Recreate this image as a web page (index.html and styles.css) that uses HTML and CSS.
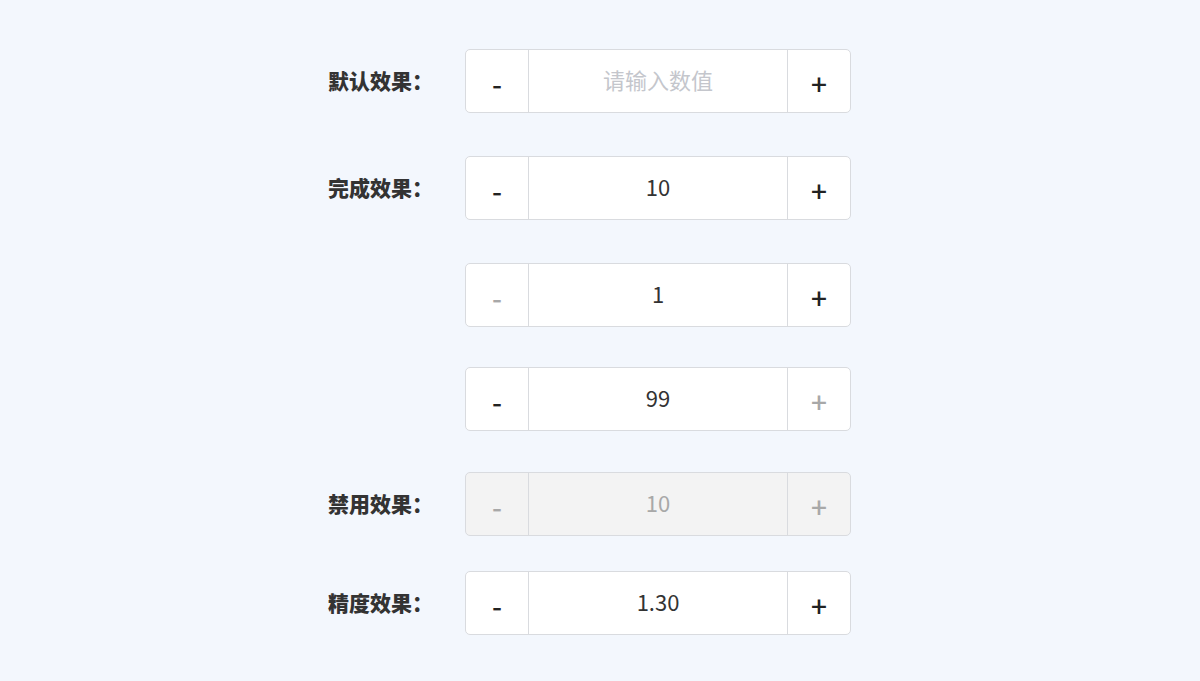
FILE: index.html
```html
<!DOCTYPE html>
<html>
<head>
    <meta charset="utf-8">
    <link rel="stylesheet" href="styles.css">
</head>
<body>
    <div class="form">
        <div class="form-row">
            <label class="form-label">默认效果：</label>
            <div class="number-box">
                <span class="step">-</span>
                <input class="number-input" type="text" placeholder="请输入数值">
                <span class="step">+</span>
            </div>
        </div>
        <div class="form-row">
            <label class="form-label">完成效果：</label>
            <div class="number-box">
                <span class="step">-</span>
                <input class="number-input" type="text" value="10">
                <span class="step">+</span>
            </div>
        </div>
        <div class="form-row">
            <label class="form-label"></label>
            <div class="number-box">
                <span class="step step-off">-</span>
                <input class="number-input" type="text" value="1">
                <span class="step">+</span>
            </div>
        </div>
        <div class="form-row">
            <label class="form-label"></label>
            <div class="number-box">
                <span class="step">-</span>
                <input class="number-input" type="text" value="99">
                <span class="step step-off">+</span>
            </div>
        </div>
        <div class="form-row">
            <label class="form-label">禁用效果：</label>
            <div class="number-box is-disabled">
                <span class="step step-off">-</span>
                <input class="number-input" type="text" value="10" disabled>
                <span class="step step-off">+</span>
            </div>
        </div>
        <div class="form-row">
            <label class="form-label">精度效果：</label>
            <div class="number-box">
                <span class="step">-</span>
                <input class="number-input" type="text" value="1.30">
                <span class="step">+</span>
            </div>
        </div>
    </div>
</body>
</html>
```

FILE: styles.css
```css
/* Page */
body {
  margin: 0;
  height: 681px;
  background-color: #f3f7fd;
  font-family: "Noto Sans CJK SC", "Noto Sans", sans-serif;
  color: #333;
  overflow: hidden;
}

.form {
  padding: 49px 0 0 265px;
}

/* Rows */
.form-row {
  display: flex;
  align-items: center;
  height: 64px;
  margin-bottom: 43px;
}

.form-row:nth-child(3) {
  margin-bottom: 40px;
}

.form-row:nth-child(4) {
  margin-bottom: 41px;
}

.form-row:nth-child(5) {
  margin-bottom: 35px;
}

.form-label {
  width: 200px;
  box-sizing: border-box;
  padding-right: 32px;
  padding-bottom: 2px;
  text-align: right;
  font-size: 21px;
  font-weight: 900;
  color: #333;
}

/* Number box */
.number-box {
  display: flex;
  width: 386px;
  height: 64px;
  box-sizing: border-box;
  border: 1px solid #d9dbdf;
  border-radius: 5px;
  background-color: #fff;
  overflow: hidden;
}

.step {
  display: flex;
  align-items: center;
  justify-content: center;
  width: 63px;
  flex: none;
  padding-top: 4px;
  box-sizing: border-box;
  font-size: 28px;
  font-weight: 500;
  color: #222;
  cursor: pointer;
  user-select: none;
}

.step:first-child {
  border-right: 1px solid #d9dbdf;
}

.step:last-child {
  border-left: 1px solid #d9dbdf;
}

.step-off {
  color: #a8a8a8;
  cursor: not-allowed;
}

.number-input {
  flex: 1;
  min-width: 0;
  border: none;
  outline: none;
  padding: 0 0 4px;
  background: transparent;
  text-align: center;
  font-family: inherit;
  font-size: 22px;
  color: #333;
}

.number-input::placeholder {
  color: #c4c6cc;
}

.is-disabled {
  background-color: #f3f3f3;
}

.is-disabled .number-input {
  color: #a8a8a8;
  -webkit-text-fill-color: #a8a8a8;
}
```
